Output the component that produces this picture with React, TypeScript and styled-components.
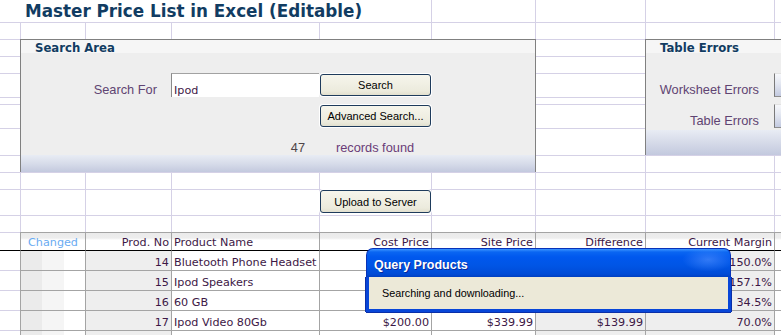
import React from 'react';
import styled, { createGlobalStyle } from 'styled-components';

// --- Sheet palette ---
const LAV = '#d5d1e6';
const GRAY = '#a4a4a4';
const INK = '#3d1846';
const LABEL = '#5f4472';
const NAVY = '#113c62';

const GlobalStyle = createGlobalStyle`
  * { box-sizing: border-box; }
  html, body { margin: 0; padding: 0; background: #fff; }
  body { font-family: 'DejaVu Sans', Verdana, sans-serif; overflow: hidden; }
`;

// --- Data ---
// prices of rows 14-16 sit under the progress dialog, so they are left blank
interface Product {
  no: number;
  name: string;
  cost: string;
  site: string;
  diff: string;
  margin: string;
}

const products: Product[] = [
  { no: 14, name: 'Bluetooth Phone Headset', cost: '', site: '', diff: '', margin: '150.0%' },
  { no: 15, name: 'Ipod Speakers', cost: '', site: '', diff: '', margin: '157.1%' },
  { no: 16, name: '60 GB', cost: '', site: '', diff: '', margin: '34.5%' },
  { no: 17, name: 'Ipod Video 80Gb', cost: '$200.00', site: '$339.99', diff: '$139.99', margin: '70.0%' },
];

type Tone = 'plain' | 'shade' | 'stripes';
type Align = 'left' | 'right' | 'center';

interface Column {
  key: keyof Product | 'changed' | 'blank';
  title: string;
  align: Align;
  tone: Tone;
}

// grid columns 2..9 of the sheet
const columns: Column[] = [
  { key: 'changed', title: 'Changed', align: 'center', tone: 'stripes' },
  { key: 'no', title: 'Prod. No', align: 'right', tone: 'shade' },
  { key: 'name', title: 'Product Name', align: 'left', tone: 'plain' },
  { key: 'cost', title: 'Cost Price', align: 'right', tone: 'plain' },
  { key: 'site', title: 'Site Price', align: 'right', tone: 'plain' },
  { key: 'diff', title: 'Difference', align: 'right', tone: 'shade' },
  { key: 'margin', title: 'Current Margin', align: 'right', tone: 'shade' },
  { key: 'blank', title: '', align: 'left', tone: 'plain' },
];

// --- Styled Components ---
const Sheet = styled.div`
  position: relative;
  width: 781px;
  height: 335px;
  overflow: hidden;
  display: grid;
  grid-template-columns: 20px 65px 86px 148px 112px 104px 110px 129px 1fr;
  grid-template-rows:
    22px 17px 17px 17px 24px 7px 24px 27px 17px 17px 26px 17px
    18px 20px 20px 20px 20px 1fr;
  font-size: 11.2px;
  color: ${INK};
  background: #fff;
`;

const BgCell = styled.div<{ $row: number; $col: number }>`
  grid-row: ${(p) => p.$row};
  grid-column: ${(p) => p.$col};
  border-top: ${(p) => (p.$row > 1 ? `1px solid ${LAV}` : 'none')};
  border-left: ${(p) => (p.$col > 1 ? `1px solid ${LAV}` : 'none')};
`;

const Title = styled.h1`
  grid-row: 1;
  grid-column: 1 / 6;
  margin: 0;
  padding: 1px 0 0 25px;
  background: #fff;
  font: bold 16.8px/21px 'DejaVu Sans', Verdana, sans-serif;
  color: ${NAVY};
  white-space: nowrap;
`;

const Panel = styled.section`
  display: grid;
  border: 1px solid #808080;
  border-bottom: none;
`;

const SearchPanel = styled(Panel)`
  grid-row: 3 / 10;
  grid-column: 2 / 7;
  margin-right: -1px;
  grid-template-columns: 64px 86px 148px 112px 1fr;
  grid-template-rows: 16px 17px 24px 7px 24px 27px 1fr;
  background: linear-gradient(
    to bottom,
    #f6f6f6 0,
    #f6f6f6 13px,
    #eeeeee 13px,
    #eeeeee 115px,
    #e8ecf4 115px,
    #d6dbe9 124px,
    #c3c9de 100%
  );
`;

const ErrorsPanel = styled(Panel)`
  grid-row: 3 / 9;
  grid-column: 8 / -1;
  border-right: none;
  grid-template-columns: 128px 1fr;
  grid-template-rows: 16px 17px 24px 7px 24px 1fr;
  background: linear-gradient(
    to bottom,
    #f6f6f6 0,
    #f6f6f6 13px,
    #eeeeee 13px,
    #eeeeee 90px,
    #e8ecf4 90px,
    #d6dbe9 102px,
    #c3c9de 100%
  );
`;

const PanelTitle = styled.h2`
  grid-row: 1;
  grid-column: 1 / -1;
  margin: 0;
  padding: 1px 0 0 14px;
  font: bold 11.7px/14px 'DejaVu Sans', Verdana, sans-serif;
  color: ${NAVY};
  white-space: nowrap;
`;

const Label = styled.div<{ $row: number; $col: number; $align: Align; $inset?: number; $color?: string }>`
  grid-row: ${(p) => p.$row};
  grid-column: ${(p) => p.$col};
  display: flex;
  align-items: flex-end;
  justify-content: ${(p) =>
    p.$align === 'right' ? 'flex-end' : p.$align === 'center' ? 'center' : 'flex-start'};
  padding-right: ${(p) => (p.$align === 'right' ? `${p.$inset ?? 15}px` : '0')};
  font-family: 'Liberation Sans', Arial, sans-serif;
  font-size: 12.8px;
  color: ${(p) => p.$color ?? LABEL};
  white-space: nowrap;
`;

const SearchBox = styled.div`
  grid-row: 3;
  grid-column: 3;
  display: flex;
  align-items: flex-end;
  padding: 0 0 0 2px;
  background: #fff;
  border-top: 1px solid #a2a2a2;
  border-left: 1px solid #8a8a8a;
  color: ${INK};
`;

const XpButton = styled.button<{ $row: number; $col: number }>`
  grid-row: ${(p) => p.$row};
  grid-column: ${(p) => p.$col};
  margin: 1px 0 1px 1px;
  padding: 0;
  border: 1px solid #1e3b5c;
  border-radius: 3px;
  background: linear-gradient(to bottom, #f6f5ec, #ecebdd 80%, #e2e0cf);
  box-shadow: 0 0 0 1px #fff;
  font-family: 'Liberation Sans', Arial, sans-serif;
  font-size: 11px;
  color: #000;
  cursor: pointer;
`;

const UploadButton = styled(XpButton)`
  margin: 1px 0 2px 1px;
`;

const SideButton = styled.div<{ $row: number }>`
  grid-row: ${(p) => p.$row};
  grid-column: 2;
  border-left: 1px solid #7a7a7a;
  border-top: 1px solid #e2e2e2;
  border-bottom: 1px solid #8e8e8e;
  background: linear-gradient(to bottom, #f7f8fb, #e3e7f1 45%, #c3cae0);
`;

const TableRow = styled.div`
  display: contents;
`;

const TableCell = styled.div<{
  $row: number;
  $col: number;
  $tone: Tone;
  $align: Align;
  $head?: boolean;
  $rule?: boolean;
}>`
  grid-row: ${(p) => p.$row};
  grid-column: ${(p) => p.$col};
  display: flex;
  align-items: flex-end;
  justify-content: ${(p) =>
    p.$align === 'right' ? 'flex-end' : p.$align === 'center' ? 'center' : 'flex-start'};
  padding: 0 2px 1px 2px;
  white-space: nowrap;
  overflow: hidden;
  border-left: ${(p) => (p.$col > 1 ? `1px solid ${GRAY}` : 'none')};
  border-top: 1px solid ${(p) => (p.$rule ? '#000' : p.$col > 1 ? GRAY : LAV)};
  background: ${(p) => {
    if (p.$head) return 'linear-gradient(to bottom, #ebebeb 0, #ededed 5px, #fff 7px)';
    if (p.$tone === 'shade') return '#eeeeee';
    if (p.$tone === 'stripes')
      return 'linear-gradient(to right, #ebebeb 0 21px, #f5f5f5 21px 43px, #fff 43px)';
    return '#fff';
  }};
`;

const ChangedHead = styled.span`
  color: #69abf2;
`;

const Dialog = styled.div`
  position: absolute;
  left: 366px;
  top: 248px;
  width: 365px;
  height: 64px;
  display: flex;
  flex-direction: column;
  z-index: 5;
`;

const DialogTitle = styled.div`
  height: 29px;
  display: flex;
  align-items: center;
  padding: 3px 0 0 7px;
  border-radius: 7px 7px 0 0;
  border: 1px solid #0832b8;
  border-bottom: none;
  background:
    radial-gradient(ellipse 26px 12px at 94% 38%, rgba(90, 150, 255, 0.55), transparent),
    linear-gradient(
      to bottom,
      #3d95ff 0,
      #0a66f2 3px,
      #0058ee 8px,
      #0055e5 60%,
      #004bd6 90%,
      #003fc0 100%
    );
  font: bold 12.5px 'Liberation Sans', Arial, sans-serif;
  color: #fff;
  text-shadow: 1px 1px 0 #0a2a9a;
`;

const DialogBody = styled.div`
  flex: 1;
  display: flex;
  align-items: center;
  padding-left: 13px;
  background: #ece9d8;
  border: 3px solid #0846d8;
  border-top: none;
  box-shadow: -1px 0 0 #0a2fa8, 1px 0 0 #0a2fa8, 0 1px 0 #0a2fa8;
  font: 10.8px 'Liberation Sans', Arial, sans-serif;
  color: #000;
`;

// --- Main Component ---
const GRID_ROWS = 12;
const GRID_COLS = 9;

const App = () => {
  const bgCells: React.ReactNode[] = [];
  for (let r = 1; r <= GRID_ROWS; r += 1) {
    for (let c = 1; c <= GRID_COLS; c += 1) {
      bgCells.push(<BgCell key={`${r}-${c}`} $row={r} $col={c} />);
    }
  }

  const cellText = (p: Product | null, col: Column) => {
    if (!p || col.key === 'changed' || col.key === 'blank') return '';
    return String(p[col.key]);
  };

  const bodyRows: (Product | null)[] = [...products, null];

  return (
    <>
      <GlobalStyle />
      <Sheet>
        {bgCells}

        <Title>Master Price List in Excel (Editable)</Title>

        <SearchPanel>
          <PanelTitle>Search Area</PanelTitle>
          <Label $row={3} $col={2} $align="right" $inset={14}>
            Search For
          </Label>
          <SearchBox>Ipod</SearchBox>
          <XpButton $row={3} $col={4} type="button">
            Search
          </XpButton>
          <XpButton $row={5} $col={4} type="button">
            Advanced Search...
          </XpButton>
          <Label $row={6} $col={3} $align="right" $inset={14} $color="#4e4548">
            47
          </Label>
          <Label $row={6} $col={4} $align="center" $color="#6a3c78">
            records found
          </Label>
        </SearchPanel>

        <ErrorsPanel>
          <PanelTitle>Table Errors</PanelTitle>
          <Label $row={3} $col={1} $align="right">
            Worksheet Errors
          </Label>
          <SideButton $row={3} />
          <Label $row={5} $col={1} $align="right">
            Table Errors
          </Label>
          <SideButton $row={5} />
        </ErrorsPanel>

        <UploadButton $row={11} $col={5} type="button">
          Upload to Server
        </UploadButton>

        <TableRow>
          <TableCell $row={13} $col={1} $tone="plain" $align="left" />
          {columns.map((col, i) => (
            <TableCell key={col.key} $row={13} $col={i + 2} $tone={col.tone} $align={col.align} $head>
              {col.key === 'changed' ? <ChangedHead>{col.title}</ChangedHead> : col.title}
            </TableCell>
          ))}
        </TableRow>

        {bodyRows.map((p, ri) => (
          <TableRow key={ri}>
            <TableCell $row={14 + ri} $col={1} $tone="plain" $align="left" $rule={ri === 0} />
            {columns.map((col, i) => (
              <TableCell
                key={col.key}
                $row={14 + ri}
                $col={i + 2}
                $tone={col.tone}
                $align={col.align}
                $rule={ri === 0}
              >
                {cellText(p, col)}
              </TableCell>
            ))}
          </TableRow>
        ))}

        <Dialog>
          <DialogTitle>Query Products</DialogTitle>
          <DialogBody>Searching and downloading...</DialogBody>
        </Dialog>
      </Sheet>
    </>
  );
};

export default App;
